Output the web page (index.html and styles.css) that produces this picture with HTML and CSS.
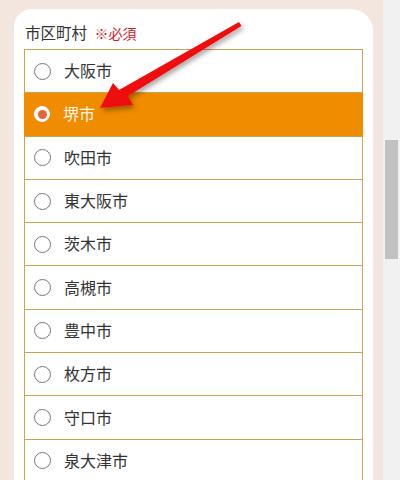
FILE: index.html
```html
<!DOCTYPE html>
<html lang="ja">
<head>
<meta charset="utf-8">
<link rel="stylesheet" href="styles.css">
</head>
<body>
<div class="page">
  <main class="main">
    <section class="card">
      <div class="label">市区町村 <span class="req">※必須</span></div>
      <ul class="list">
        <li class="row"><span class="radio"></span><span class="name">大阪市</span></li>
        <li class="row selected"><span class="radio"></span><span class="name">堺市</span></li>
        <li class="row"><span class="radio"></span><span class="name">吹田市</span></li>
        <li class="row"><span class="radio"></span><span class="name">東大阪市</span></li>
        <li class="row"><span class="radio"></span><span class="name">茨木市</span></li>
        <li class="row"><span class="radio"></span><span class="name">高槻市</span></li>
        <li class="row"><span class="radio"></span><span class="name">豊中市</span></li>
        <li class="row"><span class="radio"></span><span class="name">枚方市</span></li>
        <li class="row"><span class="radio"></span><span class="name">守口市</span></li>
        <li class="row"><span class="radio"></span><span class="name">泉大津市</span></li>
      </ul>
    </section>
    <svg class="arrow" width="400" height="480" viewBox="0 0 400 480">
      <defs>
        <filter id="sh" x="-20%" y="-20%" width="140%" height="140%">
          <feDropShadow dx="2" dy="3" stdDeviation="2.5" flood-color="#000" flood-opacity="0.35"/>
        </filter>
      </defs>
      <path d="M239 22 L241.5 26 L128 96 L133 105 L100 108 L113 83 L119 90 Z" fill="#f01010" filter="url(#sh)"/>
    </svg>
  </main>
  <div class="scrollbar"><div class="thumb"></div></div>
</div>
</body>
</html>
```
FILE: styles.css
```css
* { box-sizing: border-box; }
html, body { margin: 0; padding: 0; }
body {
  width: 400px;
  height: 480px;
  overflow: hidden;
  font-family: "Noto Sans CJK JP", "Noto Sans", sans-serif;
  color: #333;
}
.page {
  display: flex;
  height: 480px;
}
.main {
  position: relative;
  width: 383px;
  background: #f3e6de;
  padding: 9px 10px 0 14px;
}
.card {
  background: #fff;
  border-radius: 18px 22px 0 0;
  padding: 12px 10px 0 10px;
  height: 471px;
  overflow: hidden;
}
.label {
  font-size: 15.5px;
  line-height: 22px;
  padding-left: 1px;
  margin-bottom: 5px;
  color: #333;
}
.req {
  color: #d0202a;
  font-size: 14px;
  margin-left: 4px;
}
.list {
  list-style: none;
  margin: 0;
  padding: 0;
  border-top: 1px solid #c9a553;
}
.row {
  display: flex;
  align-items: center;
  height: 43.3px;
  border: 1px solid #c9a553;
  border-top: none;
  padding-left: 9px;
  padding-bottom: 2px;
  font-size: 16px;
  background: #fff;
}
.radio {
  width: 17px;
  height: 17px;
  border: 1px solid #777;
  border-radius: 50%;
  background: #fff;
  flex: none;
  display: flex;
  align-items: center;
  justify-content: center;
  margin-top: 2px;
}
.name {
  margin-left: 13px;
  color: #333;
}
.row.selected {
  background: #ef8c00;
  border-left-color: #ef8c00;
  border-right-color: #ef8c00;
}
.row.selected .radio {
  border: 1px solid #fff;
  background: #fff;
  width: 16px;
  height: 16px;
}
.row.selected .radio::after {
  content: "";
  width: 9px;
  height: 9px;
  border-radius: 50%;
  background: #e0673a;
}
.row.selected .name {
  color: #fff6e6;
}
.arrow {
  position: absolute;
  left: 0;
  top: 0;
  pointer-events: none;
}
.scrollbar {
  width: 17px;
  background: #f1f1f1;
  padding: 140px 2px 0 2px;
}
.thumb {
  height: 119px;
  background: #c1c1c1;
}
```
